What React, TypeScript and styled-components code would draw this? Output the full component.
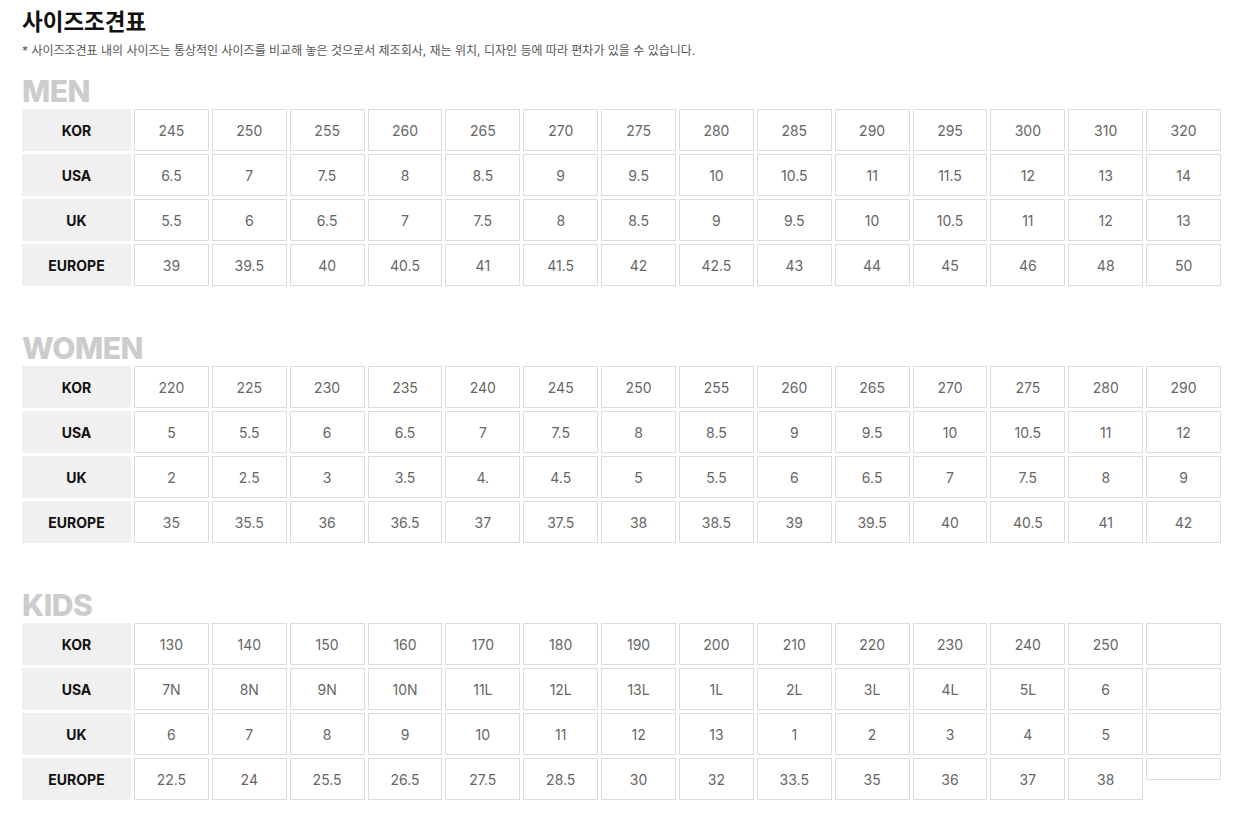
import React from 'react'
import styled, { createGlobalStyle } from 'styled-components'

const GlobalStyle = createGlobalStyle`
  html, body {
    margin: 0;
    padding: 0;
    background: #fff;
  }
  body {
    font-family: Inter, "Noto Sans CJK KR", "Noto Sans", sans-serif;
    color: #111;
  }
`

type SizeRow = { label: string; values: string[] }
type Section = { name: string; rows: SizeRow[] }

const sections: Section[] = [
  {
    name: 'MEN',
    rows: [
      { label: 'KOR', values: ['245', '250', '255', '260', '265', '270', '275', '280', '285', '290', '295', '300', '310', '320'] },
      { label: 'USA', values: ['6.5', '7', '7.5', '8', '8.5', '9', '9.5', '10', '10.5', '11', '11.5', '12', '13', '14'] },
      { label: 'UK', values: ['5.5', '6', '6.5', '7', '7.5', '8', '8.5', '9', '9.5', '10', '10.5', '11', '12', '13'] },
      { label: 'EUROPE', values: ['39', '39.5', '40', '40.5', '41', '41.5', '42', '42.5', '43', '44', '45', '46', '48', '50'] },
    ],
  },
  {
    name: 'WOMEN',
    rows: [
      { label: 'KOR', values: ['220', '225', '230', '235', '240', '245', '250', '255', '260', '265', '270', '275', '280', '290'] },
      { label: 'USA', values: ['5', '5.5', '6', '6.5', '7', '7.5', '8', '8.5', '9', '9.5', '10', '10.5', '11', '12'] },
      { label: 'UK', values: ['2', '2.5', '3', '3.5', '4.', '4.5', '5', '5.5', '6', '6.5', '7', '7.5', '8', '9'] },
      { label: 'EUROPE', values: ['35', '35.5', '36', '36.5', '37', '37.5', '38', '38.5', '39', '39.5', '40', '40.5', '41', '42'] },
    ],
  },
  {
    name: 'KIDS',
    rows: [
      { label: 'KOR', values: ['130', '140', '150', '160', '170', '180', '190', '200', '210', '220', '230', '240', '250', ''] },
      { label: 'USA', values: ['7N', '8N', '9N', '10N', '11L', '12L', '13L', '1L', '2L', '3L', '4L', '5L', '6', ''] },
      { label: 'UK', values: ['6', '7', '8', '9', '10', '11', '12', '13', '1', '2', '3', '4', '5', ''] },
      { label: 'EUROPE', values: ['22.5', '24', '25.5', '26.5', '27.5', '28.5', '30', '32', '33.5', '35', '36', '37', '38', ''] },
    ],
  },
]

const Page = styled.div`
  padding: 6px 22px 20px;
  width: 1199px;
`

const Title = styled.h1`
  margin: 0;
  font-size: 22.5px;
  font-weight: 700;
  line-height: 32px;
  color: #111;
`

const Note = styled.p`
  margin: 5px 0 0;
  font-size: 12px;
  line-height: 16px;
  color: #555;
`

const SectionBlock = styled.section<{ $first?: boolean }>`
  margin-top: ${p => (p.$first ? '15px' : '45px')};
`

const SectionName = styled.h2`
  margin: 0;
  font-size: 30px;
  line-height: 35px;
  font-weight: 800;
  color: #cccccc;
  letter-spacing: -0.5px;
`

const Grid = styled.div`
  display: grid;
  grid-template-columns: 109px repeat(14, 1fr);
  grid-auto-rows: 42px;
  gap: 3px;
`

const LabelCell = styled.div`
  display: flex;
  align-items: center;
  justify-content: center;
  background: #f0f0f0;
  font-size: 14px;
  font-weight: 700;
  color: #111;
`

const ValueCell = styled.div<{ $short?: boolean }>`
  display: flex;
  align-items: center;
  justify-content: center;
  box-sizing: border-box;
  border: 1px solid #dcdcdc;
  background: #fff;
  font-size: 14px;
  color: #666;
  ${p => (p.$short ? 'height: 22px; align-self: start;' : '')}
`

export default function App() {
  return (
    <Page>
      <GlobalStyle />
      <Title>사이즈조견표</Title>
      <Note>* 사이즈조견표 내의 사이즈는 통상적인 사이즈를 비교해 놓은 것으로서 제조회사, 재는 위치, 디자인 등에 따라 편차가 있을 수 있습니다.</Note>
      {sections.map((section, si) => (
        <SectionBlock key={section.name} $first={si === 0}>
          <SectionName>{section.name}</SectionName>
          <Grid>
            {section.rows.map((row, ri) => (
              <React.Fragment key={row.label}>
                <LabelCell>{row.label}</LabelCell>
                {row.values.map((v, vi) => {
                  // kids chart has no 14th size; the last europe cell is left half-height
                  const isKidsTail = section.name === 'KIDS' && vi === 13
                  if (isKidsTail && ri === section.rows.length - 1) {
                    return <ValueCell key={vi} $short />
                  }
                  return <ValueCell key={vi}>{v}</ValueCell>
                })}
              </React.Fragment>
            ))}
          </Grid>
        </SectionBlock>
      ))}
    </Page>
  )
}
